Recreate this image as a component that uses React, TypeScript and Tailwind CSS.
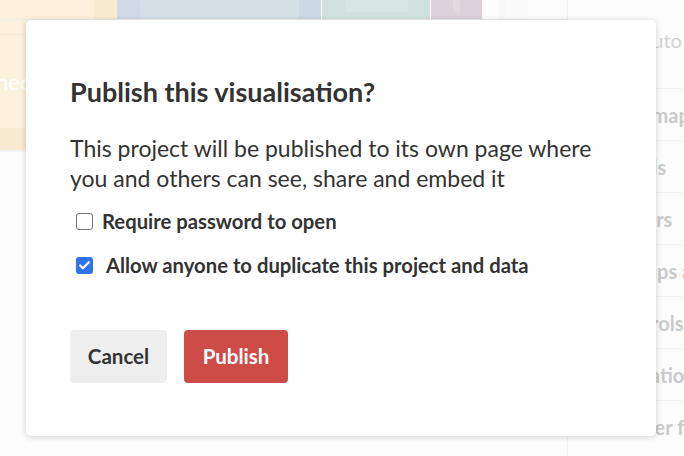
import { Check } from "lucide-react";

const rows = [
  ["Base map", "pl-[36px]"],
  ["Labels", "pl-[42px]"],
  ["Layers", "pl-[47px]"],
  ["Popups and panels", "pl-[43px]"],
  ["Controls", "pl-[40px]"],
  ["Animation", "pl-[35px]"],
  ["Number formatting", "pl-[32px]"],
] as const;

function Backdrop() {
  return (
    <div className="absolute inset-0 flex bg-[#fcfcfc] font-['Lato',sans-serif]">
      <div className="flex-1">
        {/* top strip of swatches */}
        <div className="flex h-[20px] border-b border-[#eeeeee]">
          <div className="flex w-[117px] bg-[#fbf1dc]">
            <div className="ml-auto w-[23px] bg-[#f9ebd0]" />
          </div>
          <div className="flex w-[204px] bg-[#d5dfe8]">
            <div className="w-[23px] bg-[#d0dae5]" />
            <div className="ml-auto w-[22px] bg-[#ccd8e3]" />
          </div>
          <div className="ml-px flex w-[108px] bg-[#d0e1de]">
            <div className="ml-[23px] h-[12px] w-[63px] bg-[#d7e6e3]" />
          </div>
          <div className="ml-px flex w-[51px] bg-[#dcd1da]">
            <div className="ml-[22px] h-[12px] w-[7px] bg-[#e2d8df]" />
          </div>
          <div className="ml-[17px] w-[6px] bg-[#f7f7f7]" />
          <div className="w-[23px] bg-[#fafafa]" />
        </div>

        {/* left yellow card */}
        <div className="flex w-[117px] flex-col bg-[#fbf1dc]">
          <div className="h-[15px] border-b border-[#f6ead2]" />
          <div className="flex h-[93px] items-center text-[22px] text-white">
            <span className="-ml-[4px]">ned</span>
          </div>
          <div className="h-[22px] bg-[#f8ebd1]" />
        </div>
        <div className="h-[2px] w-[117px] bg-[#f3f3f3]" />
      </div>

      {/* right settings panel */}
      <aside className="flex w-[117px] flex-col border-l border-[#efefef]">
        <div className="flex h-[88px] items-center pb-[8px] pl-[71px] text-[20px] text-[#d2d2d2]">
          Auto
        </div>
        {rows.map(([label, pad]) => (
          <div
            key={label}
            className={`flex h-[52px] shrink-0 items-center whitespace-nowrap border-t border-[#efefef] text-[20px] font-bold text-[#cacaca] ${pad}`}
          >
            {label}
          </div>
        ))}
      </aside>
    </div>
  );
}

function Box({ checked }: { checked?: boolean }) {
  return checked ? (
    <span className="flex h-[17px] w-[17px] shrink-0 items-center justify-center rounded-[3px] bg-[#2f73ec]">
      <Check className="h-[13px] w-[13px] text-white" strokeWidth={4} />
    </span>
  ) : (
    <span className="h-[17px] w-[17px] shrink-0 rounded-[3px] border border-[#777777] bg-white" />
  );
}

export default function App() {
  return (
    <div className="relative h-[456px] w-[684px] overflow-hidden font-['Lato',sans-serif] text-[#333333]">
      <Backdrop />

      <div className="absolute left-[26px] top-[20px] h-[416px] w-[630px] rounded-[5px] bg-white px-[44px] pt-[56px] shadow-[0_1px_6px_rgba(0,0,0,0.18)]">
        <h2 className="text-[27px] font-bold leading-[32px]">Publish this visualisation?</h2>

        <p className="mt-[25px] text-[23px] leading-[30px]">
          This project will be published to its own page where you and others can see, share and
          embed it
        </p>

        <div className="mt-[18px] flex flex-col gap-[24px] pl-[6px] text-[20.25px] font-bold">
          <label className="flex h-[20px] items-center gap-[9px]">
            <Box />
            Require password to open
          </label>
          <label className="flex h-[20px] items-center gap-[13px]">
            <Box checked />
            Allow anyone to duplicate this project and data
          </label>
        </div>

        <div className="mt-[55px] flex gap-[17px] text-[20.5px] font-bold">
          <button className="h-[53px] w-[97px] rounded-[4px] bg-[#eeeeee] text-[#333333]">
            Cancel
          </button>
          <button className="h-[53px] w-[104px] rounded-[4px] bg-[#cd4c47] text-white">
            Publish
          </button>
        </div>
      </div>
    </div>
  );
}
